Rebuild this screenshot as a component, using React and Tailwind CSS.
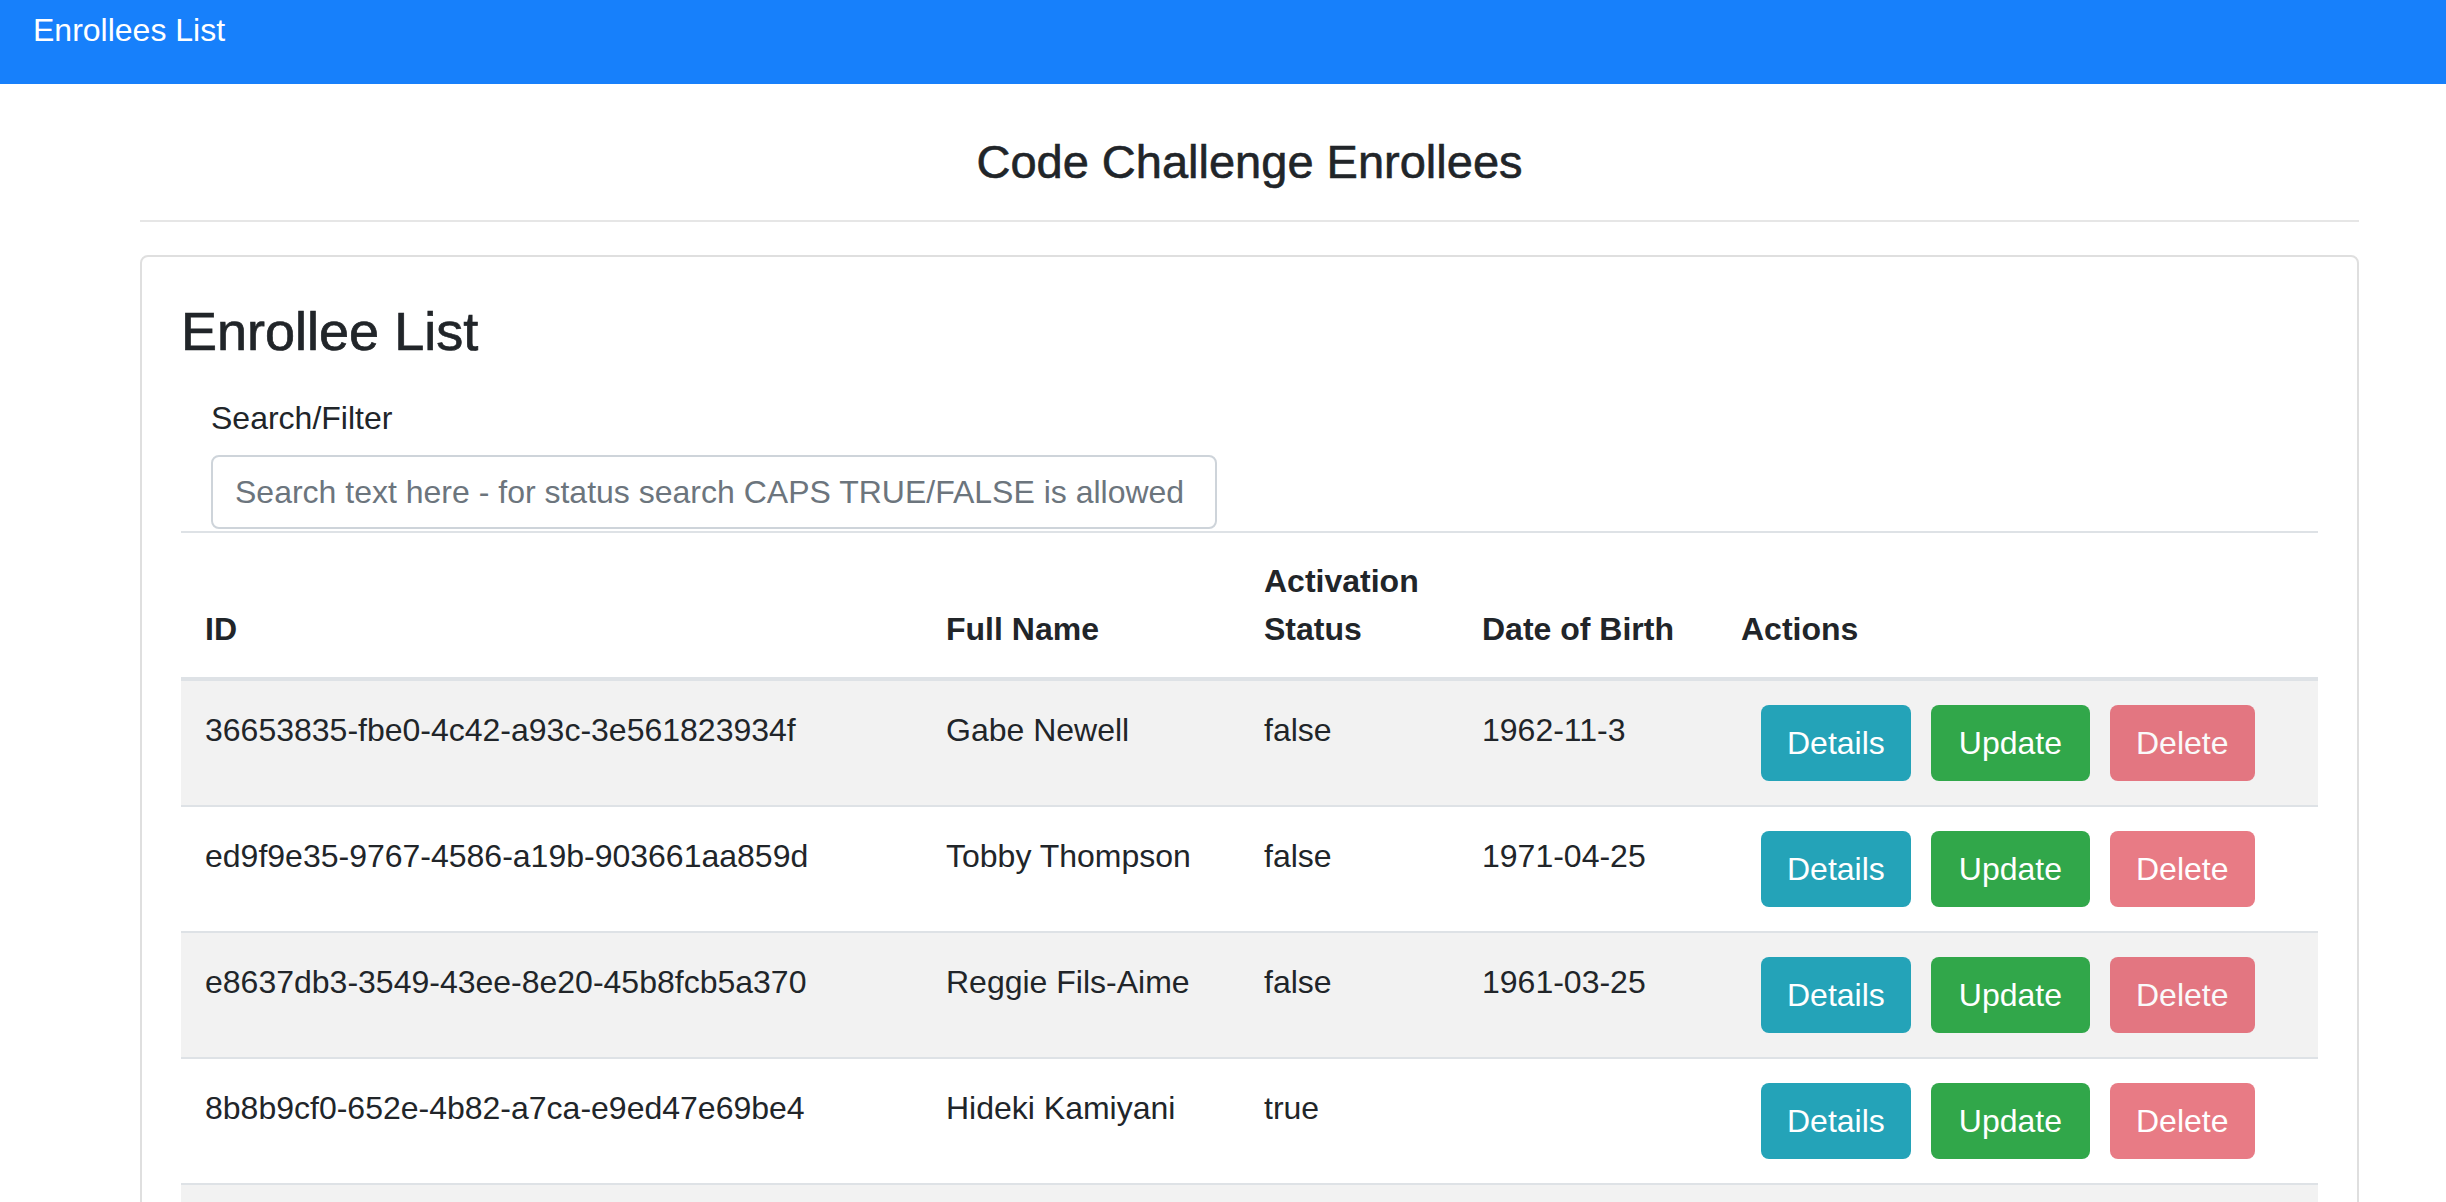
import React from "react";

const rows = [
  { id: "36653835-fbe0-4c42-a93c-3e561823934f", name: "Gabe Newell", status: "false", dob: "1962-11-3" },
  { id: "ed9f9e35-9767-4586-a19b-903661aa859d", name: "Tobby Thompson", status: "false", dob: "1971-04-25" },
  { id: "e8637db3-3549-43ee-8e20-45b8fcb5a370", name: "Reggie Fils-Aime", status: "false", dob: "1961-03-25" },
  { id: "8b8b9cf0-652e-4b82-a7ca-e9ed47e69be4", name: "Hideki Kamiyani", status: "true", dob: "" },
];

function Btn({ children, cls }) {
  return (
    <button
      className={
        "ml-[20px] h-[76px] rounded-[8px] border-2 border-transparent text-[32px] leading-[48px] text-white " +
        cls
      }
    >
      {children}
    </button>
  );
}

const td = "border-t-2 border-[#dee2e6] px-[24px] pb-[24px] pt-[25px] align-top";

export default function App() {
  return (
    <div className="h-[1202px] w-[2446px] overflow-hidden bg-white font-['Liberation_Sans',Arial,sans-serif] text-[#212529]">
      <nav className="h-[84px] bg-[#1780fb] pl-[33px] pt-[6px] text-[32px] leading-[48px] text-white">
        Enrollees List
      </nav>
      <main className="ml-[140px] w-[2219px]">
        <h3 className="mt-[50px] text-center text-[47px] font-medium leading-[56px] [-webkit-text-stroke:0.6px_#212529]">
          Code Challenge Enrollees
        </h3>
        <div className="mt-[30px] h-[2px] bg-[#e6e6e6]" />
        <div className="mt-[33px] h-[1000px] rounded-[8px] border-2 border-[#dfdfdf] px-[39px] pt-[42px]">
          <h2 className="text-[54px] font-medium leading-[65px] [-webkit-text-stroke:0.7px_#212529]">Enrollee List</h2>
          <div className="ml-[30px] mt-[30px]">
            <label className="mb-[13px] block text-[32px] leading-[48px]">Search/Filter</label>
            <input
              className="block h-[74px] w-[1006px] rounded-[8px] border-2 border-[#ced4da] px-[22px] text-[32px] outline-none placeholder:text-[#6c757d]"
              placeholder="Search text here - for status search CAPS TRUE/FALSE is allowed"
            />
          </div>
          <table className="mt-[2px] w-full border-collapse text-left text-[32px] leading-[48px]">
            <colgroup>
              <col className="w-[741px]" />
              <col className="w-[318px]" />
              <col className="w-[218px]" />
              <col className="w-[259px]" />
              <col />
            </colgroup>
            <thead>
              <tr>
                {["ID", "Full Name", "Activation Status", "Date of Birth", "Actions"].map((h) => (
                  <th
                    key={h}
                    className="border-t-2 border-b-4 border-[#dee2e6] p-[24px] align-bottom font-bold"
                  >
                    {h}
                  </th>
                ))}
              </tr>
            </thead>
            <tbody>
              {rows.map((r, i) => (
                <tr key={r.id} className={i % 2 === 0 ? "bg-[#f2f2f2]" : "bg-white"}>
                  <td className={td}>{r.id}</td>
                  <td className={td}>{r.name}</td>
                  <td className={td}>{r.status}</td>
                  <td className={td}>{r.dob}</td>
                  <td className="whitespace-nowrap border-t-2 border-[#dee2e6] py-[24px] pl-[24px] pr-[24px] align-top">
                    <div className="flex">
                      <Btn cls="bg-[#24a3b8] px-[24px]">Details</Btn>
                      <Btn cls="bg-[#31a74a] px-[26px]">Update</Btn>
                      <Btn cls="bg-[#dc3545] px-[24px] opacity-65">Delete</Btn>
                    </div>
                  </td>
                </tr>
              ))}
              <tr className="h-[126px] bg-[#f2f2f2]">
                <td className="border-t-2 border-[#dee2e6]" />
                <td className="border-t-2 border-[#dee2e6]" />
                <td className="border-t-2 border-[#dee2e6]" />
                <td className="border-t-2 border-[#dee2e6]" />
                <td className="border-t-2 border-[#dee2e6]" />
              </tr>
            </tbody>
          </table>
        </div>
      </main>
    </div>
  );
}
